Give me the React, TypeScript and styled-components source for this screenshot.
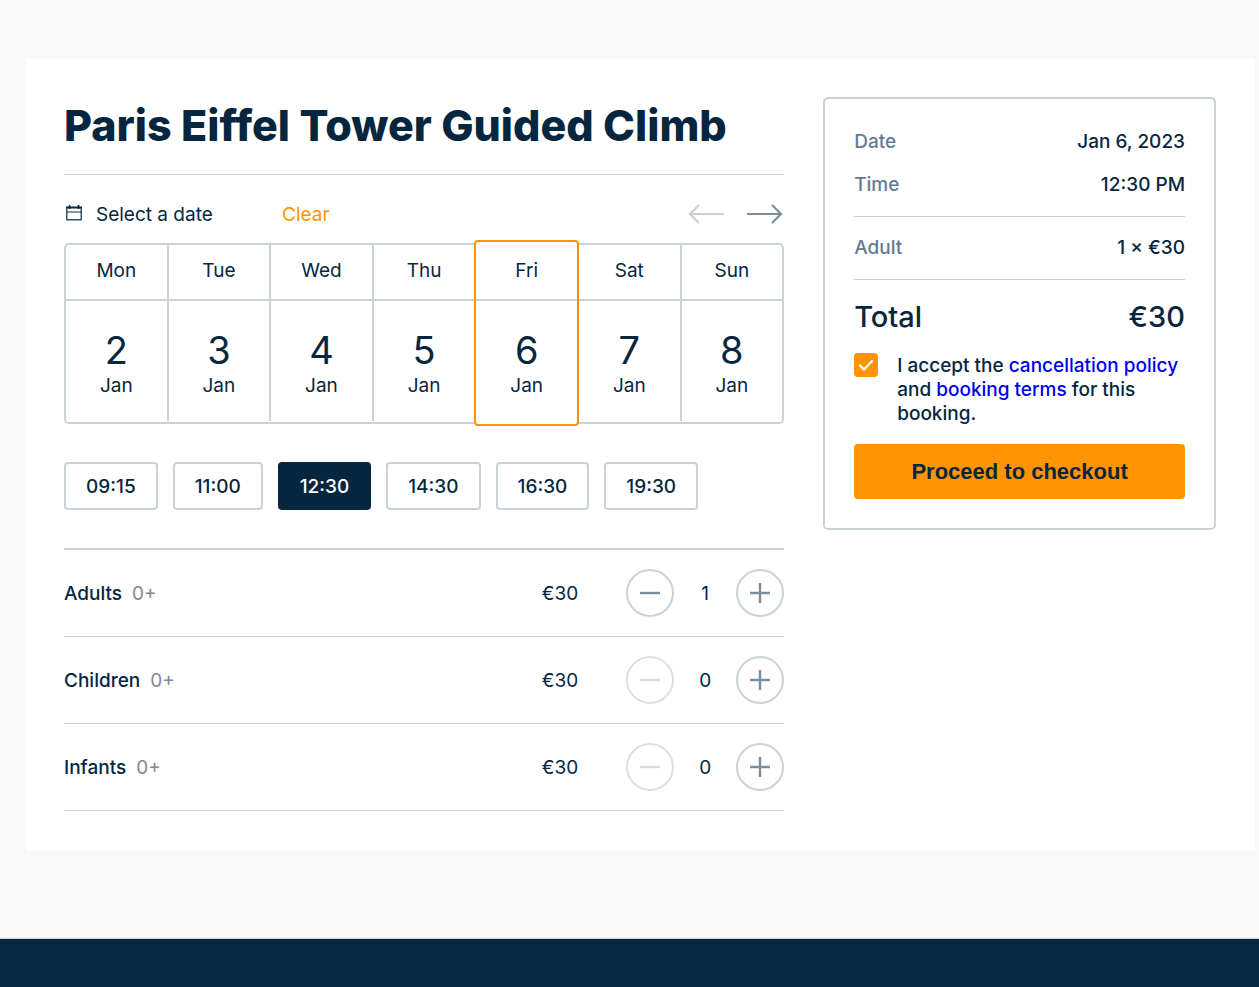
import React, { useState } from 'react';
import styled, { createGlobalStyle } from 'styled-components';

const navy = '#06263f';
const line = '#cad2d8';
const steel = '#7a8e9c';
const orange = '#ff9400';

const GlobalStyle = createGlobalStyle`
  *, *::before, *::after { box-sizing: border-box; }
  body {
    margin: 0;
    background: #f8f8f8;
    color: ${navy};
    font-family: Inter, 'Liberation Sans', sans-serif;
    font-size: 19px;
    line-height: 24px;
  }
  #root { min-height: 100vh; display: flex; flex-direction: column; }
  button { font: inherit; color: inherit; cursor: pointer; }
  button:disabled { cursor: default; }
`;

const Page = styled.main`
  padding: 59px 4px 87px 26px;
`;

const Panel = styled.div`
  display: grid;
  grid-template-columns: minmax(0, 11fr) minmax(0, 6fr);
  gap: 39px;
  align-items: start;
  padding: 38px 39px 40px 38px;
  background: #fff;
`;

const Title = styled.h1`
  margin: 0;
  padding-bottom: 21px;
  border-bottom: 1px solid ${line};
  font-size: 43px;
  font-weight: 800;
  line-height: 56px;
`;

const DateBar = styled.div`
  display: flex;
  align-items: center;
  padding: 25px 0 14px;
  line-height: 29px;
`;

const DateLabel = styled.span`
  display: flex;
  align-items: center;
  gap: 12px;
  width: 218px;
`;

const ClearButton = styled.button`
  padding: 0;
  border: 0;
  background: none;
  color: ${orange};
`;

const Arrows = styled.div`
  display: flex;
  gap: 20px;
  margin-left: auto;
`;

const ArrowButton = styled.button`
  display: flex;
  padding: 0;
  border: 0;
  background: none;
  color: ${steel};
  &:disabled { color: ${line}; }
`;

const WeekFrame = styled.div`
  padding-bottom: 1px;
  border: 2px solid ${line};
  border-radius: 5px;
`;

const Week = styled.div`
  display: grid;
  grid-template-columns: repeat(7, minmax(0, 1fr));
  margin-left: -2px;
`;

const Day = styled.button<{ $selected: boolean }>`
  display: flex;
  flex-direction: column;
  padding: 0;
  border: 0 solid ${line};
  border-left-width: 2px;
  background: none;
  &:first-child { border-left-color: transparent; background-clip: padding-box; }
  ${({ $selected }) => $selected && `
    && {
      position: relative;
      z-index: 1;
      margin: -5px -2px -5px 0;
      padding: 3px 0;
      border: 2px solid ${orange};
      border-radius: 4px;
      background: #fff;
    }
  `}
`;

const Weekday = styled.span`
  width: 100%;
  height: 56px;
  border-bottom: 2px solid ${line};
  line-height: 52px;
`;

const DayDate = styled.span`
  display: flex;
  flex-direction: column;
  align-items: center;
  width: 100%;
  height: 120px;
  padding-top: 25px;
`;

const DayNumber = styled.span`
  font-size: 38px;
  line-height: 48px;
`;

const Slots = styled.div`
  display: flex;
  flex-wrap: wrap;
  gap: 15px;
  padding: 38px 0;
`;

const Slot = styled.button<{ $selected: boolean }>`
  height: 48px;
  padding: 1px 20px 0;
  border: 2px solid ${({ $selected }) => ($selected ? navy : line)};
  border-radius: 4px;
  background: ${({ $selected }) => ($selected ? navy : '#fff')};
  color: ${({ $selected }) => ($selected ? '#fff' : navy)};
  font-weight: 500;
`;

const Tickets = styled.ul`
  margin: 0;
  padding: 0;
  border-top: 2px solid ${line};
  list-style: none;
`;

const Ticket = styled.li`
  display: flex;
  align-items: center;
  padding: 19px 0;
  border-bottom: 1px solid ${line};
  > span, output { padding-top: 2px; }
`;

const TicketName = styled.span`
  flex: 1;
  font-weight: 500;
`;

const Age = styled.span`
  margin-left: 10px;
  color: #868686;
  font-weight: 400;
`;

const Stepper = styled.div`
  display: flex;
  align-items: center;
  margin-left: 48px;
`;

const Count = styled.output`
  width: 62px;
  text-align: center;
`;

const StepButton = styled.button`
  display: grid;
  place-items: center;
  width: 48px;
  height: 48px;
  padding: 0;
  border: 2px solid ${line};
  border-radius: 50%;
  background: none;
  color: ${steel};
  &:disabled { border-color: #dae0e4; color: #d5dbdf; }
`;

const Summary = styled.aside`
  padding: 29px;
  border: 2px solid ${line};
  border-radius: 5px;
  font-weight: 500;
`;

const Lines = styled.dl`
  display: flex;
  flex-direction: column;
  gap: 15px;
  margin: 0;
  padding-bottom: 17px;
  border-bottom: 1px solid ${line};
  line-height: 28px;
  & + & { padding-top: 17px; }
`;

const Line = styled.div`
  display: flex;
  justify-content: space-between;
  dt { color: #627b93; }
  dd { margin: 0; }
`;

const Total = styled.div`
  display: flex;
  justify-content: space-between;
  padding: 19px 0 18px;
  font-size: 29px;
  line-height: 36px;
`;

const Terms = styled.div`
  display: flex;
  align-items: flex-start;
  gap: 19px;
  label { padding-top: 1px; }
  a { color: #0000ee; text-decoration: none; }
`;

const TickBox = styled.span`
  display: grid;
  flex: none;
  width: 24px;
  height: 24px;
  > * { grid-area: 1 / 1; }
  svg { place-self: center; pointer-events: none; visibility: hidden; }
  input:checked + svg { visibility: visible; }
`;

const Tick = styled.input`
  appearance: none;
  width: 24px;
  height: 24px;
  margin: 0;
  border: 2px solid ${line};
  border-radius: 4px;
  &:checked { border-color: ${orange}; background: ${orange}; }
`;

const Checkout = styled.button`
  width: 100%;
  height: 55px;
  margin-top: 18px;
  border: 0;
  border-radius: 4px;
  background: ${orange};
  font-family: 'Liberation Sans', Arial, sans-serif;
  font-size: 22px;
  font-weight: 700;
`;

const Footer = styled.footer`
  flex: 1;
  min-height: 48px;
  border-top: 1px solid ${line};
  background: #082740;
`;

const CalendarIcon = () => (
  <svg width="20" height="21" viewBox="0 0 20 21" fill="none" stroke={navy} aria-hidden="true">
    <path d="M2.75 3v12.75h14.5V3" strokeWidth="1.5" strokeLinejoin="round" opacity="0.8" />
    <path d="M2 3.5h16" strokeWidth="2" />
    <path d="M3 8h14" strokeWidth="1.3" opacity="0.75" />
    <path d="M5.5 1v4M14.5 1v4" strokeWidth="1.6" />
  </svg>
);

const ArrowIcon = ({ back = false }: { back?: boolean }) => (
  <svg width="38" height="21" viewBox="0 0 38 21" fill="none" stroke="currentColor" strokeWidth="2.2" aria-hidden="true">
    <path d={back ? 'M36 10H2M11 1L2 10l9 9' : 'M1 10h34M26 1l9 9-9 9'} />
  </svg>
);

const StepIcon = ({ plus = false }: { plus?: boolean }) => (
  <svg width="20" height="20" viewBox="0 0 20 20" fill="none" stroke="currentColor" strokeWidth="2.4" aria-hidden="true">
    <path d={plus ? 'M0 10h20M10 0v20' : 'M0 10h20'} />
  </svg>
);

const days = [['Mon', 2], ['Tue', 3], ['Wed', 4], ['Thu', 5], ['Fri', 6], ['Sat', 7], ['Sun', 8]] as const;
const slots = ['09:15', '11:00', '12:30', '14:30', '16:30', '19:30'];
const tickets = ['Adults', 'Children', 'Infants'];

export default function App() {
  const [day, setDay] = useState<number | null>(6);
  const [slot, setSlot] = useState('12:30');
  const [counts, setCounts] = useState([1, 0, 0]);

  const step = (index: number, by: number) =>
    setCounts(counts.map((n, i) => (i === index ? n + by : n)));

  return (
    <>
      <GlobalStyle />
      <Page>
        <Panel>
          <section>
            <Title>Paris Eiffel Tower Guided Climb</Title>
            <DateBar>
              <DateLabel><CalendarIcon />Select a date</DateLabel>
              <ClearButton type="button" onClick={() => setDay(null)}>Clear</ClearButton>
              <Arrows>
                <ArrowButton type="button" aria-label="Previous week" disabled><ArrowIcon back /></ArrowButton>
                <ArrowButton type="button" aria-label="Next week"><ArrowIcon /></ArrowButton>
              </Arrows>
            </DateBar>
            <WeekFrame>
              <Week>
                {days.map(([name, date]) => (
                  <Day key={date} type="button" $selected={day === date} aria-pressed={day === date} onClick={() => setDay(date)}>
                    <Weekday>{name}</Weekday>
                    <DayDate>
                      <DayNumber>{date}</DayNumber>
                      <span>Jan</span>
                    </DayDate>
                  </Day>
                ))}
              </Week>
            </WeekFrame>
            <Slots>
              {slots.map((time) => (
                <Slot key={time} type="button" $selected={slot === time} aria-pressed={slot === time} onClick={() => setSlot(time)}>
                  {time}
                </Slot>
              ))}
            </Slots>
            <Tickets>
              {tickets.map((name, i) => (
                <Ticket key={name}>
                  <TicketName>{name}<Age>0+</Age></TicketName>
                  <span>€30</span>
                  <Stepper>
                    <StepButton type="button" aria-label={`Remove ${name}`} disabled={counts[i] === 0} onClick={() => step(i, -1)}>
                      <StepIcon />
                    </StepButton>
                    <Count>{counts[i]}</Count>
                    <StepButton type="button" aria-label={`Add ${name}`} onClick={() => step(i, 1)}>
                      <StepIcon plus />
                    </StepButton>
                  </Stepper>
                </Ticket>
              ))}
            </Tickets>
          </section>
          <Summary>
            <Lines>
              <Line><dt>Date</dt><dd>Jan 6, 2023</dd></Line>
              <Line><dt>Time</dt><dd>12:30 PM</dd></Line>
            </Lines>
            <Lines>
              <Line><dt>Adult</dt><dd>1 × €30</dd></Line>
            </Lines>
            <Total><span>Total</span><span>€30</span></Total>
            <Terms>
              <TickBox>
                <Tick id="terms" type="checkbox" defaultChecked />
                <svg width="16" height="12" viewBox="0 0 16 12" fill="none" stroke="#fff" strokeWidth="2.2" strokeLinecap="round" strokeLinejoin="round" aria-hidden="true">
                  <path d="M2 6.5l4 4 8-8.500" />
                </svg>
              </TickBox>
              <label htmlFor="terms">
                I accept the <a href="#cancellation">cancellation policy</a> and <a href="#terms">booking terms</a> for this booking.
              </label>
            </Terms>
            <Checkout type="button">Proceed to checkout</Checkout>
          </Summary>
        </Panel>
      </Page>
      <Footer />
    </>
  );
}
